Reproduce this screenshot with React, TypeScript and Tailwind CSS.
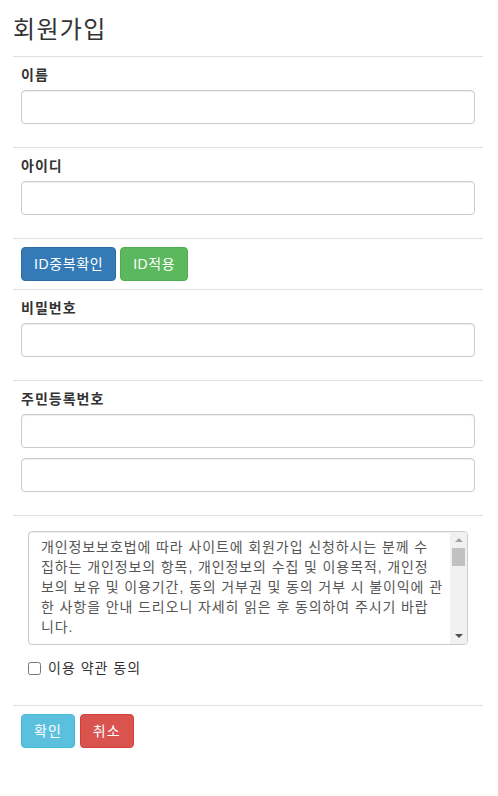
import { useState } from "react";

const font = { fontFamily: '"Liberation Sans", "Noto Sans CJK KR", sans-serif' };

const terms = [
  "개인정보보호법에 따라 사이트에 회원가입 신청하시는 분께 수",
  "집하는 개인정보의 항목, 개인정보의 수집 및 이용목적, 개인정",
  "보의 보유 및 이용기간, 동의 거부권 및 동의 거부 시 불이익에 관",
  "한 사항을 안내 드리오니 자세히 읽은 후 동의하여 주시기 바랍",
  "니다.",
].join("\n");

const inputCls =
  "block w-full h-[34px] rounded-[4px] border border-[#ccc] bg-white px-3 text-[14px] text-[#555] shadow-[inset_0_1px_1px_rgba(0,0,0,0.075)] outline-none";

const Field = ({ label, count = 1 }: { label: string; count?: number }) => (
  <div className="px-[8px] pt-[8px] pb-[23px]">
    <label className="block h-[20px] leading-[20px] mb-[5px] text-[14px] font-bold text-[#333]">{label}</label>
    <div className="flex flex-col gap-[10px]">
      {Array.from({ length: count }).map((_, i) => (
        <input key={i} type="text" className={inputCls} />
      ))}
    </div>
  </div>
);

const Hr = () => <div className="h-px bg-[#e0e0e0]" />;

export default function App() {
  const [agree, setAgree] = useState(false);

  return (
    <div className="min-h-screen bg-white pl-[13px] pr-[15px] tracking-[1px]" style={font}>
      <h1 className="pt-[17px] pb-[13px] text-[24px] leading-[26px] font-normal tracking-[1.3px] text-[#333]">회원가입</h1>
      <Hr />
      <Field label="이름" />
      <Hr />
      <Field label="아이디" />
      <Hr />
      <div className="flex gap-[4px] px-[8px] py-[8px]">
        <button className="h-[34px] rounded-[4px] border border-[#2e6da4] bg-[#337ab7] px-3 text-[14px] tracking-[0.6px] text-white">
          ID중복확인
        </button>
        <button className="h-[34px] rounded-[4px] border border-[#4cae4c] bg-[#5cb85c] px-3 text-[14px] tracking-[0.6px] text-white">
          ID적용
        </button>
      </div>
      <Hr />
      <Field label="비밀번호" />
      <Hr />
      <Field label="주민등록번호" count={2} />
      <Hr />
      <div className="px-[15px] pt-[15px] pb-[27px]">
        <div className="relative">
          <textarea
            readOnly
            value={terms}
            className="block w-full h-[114px] resize-none overflow-hidden rounded-[4px] border border-[#ccc] bg-white pl-[12px] pr-[18px] pt-[5px] text-[14px] leading-[20px] tracking-[0.9px] text-[#555] shadow-[inset_0_1px_1px_rgba(0,0,0,0.075)] outline-none"
            style={font}
          />
          {/* scrollbar */}
          <div className="pointer-events-none absolute right-[1px] top-[1px] bottom-[1px] flex w-[17px] flex-col items-center bg-[#f1f1f1] rounded-r-[3px]">
            <div className="flex h-[16px] items-center justify-center">
              <span className="h-0 w-0 border-x-[4px] border-b-[4px] border-x-transparent border-b-[#a3a3a3]" />
            </div>
            <div className="h-[18px] w-[13px] bg-[#c1c1c1]" />
            <div className="flex-1" />
            <div className="flex h-[17px] items-center justify-center">
              <span className="h-0 w-0 border-x-[4px] border-t-[4px] border-x-transparent border-t-[#505050]" />
            </div>
          </div>
        </div>
        <label className="mt-[13px] flex h-[20px] items-center gap-[7px] text-[14px] text-[#333]">
          <input
            type="checkbox"
            checked={agree}
            onChange={(e) => setAgree(e.target.checked)}
            className="m-0 h-[13px] w-[13px]"
          />
          이용 약관 동의
        </label>
      </div>
      <Hr />
      <div className="flex gap-[5px] px-[8px] pt-[8px]">
        <button className="h-[34px] rounded-[4px] border border-[#46b8da] bg-[#5bc0de] px-3 text-[14px] text-white">
          확인
        </button>
        <button className="h-[34px] rounded-[4px] border border-[#d43f3a] bg-[#d9534f] px-3 text-[14px] text-white">
          취소
        </button>
      </div>
    </div>
  );
}
